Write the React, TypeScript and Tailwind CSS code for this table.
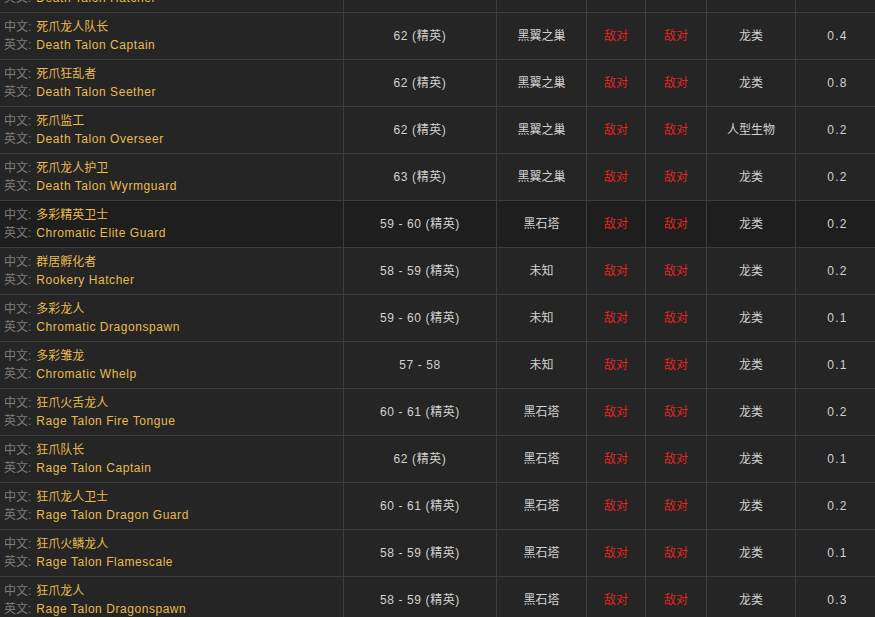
const rows = [
  { cn: "死爪孵化者", en: "Death Talon Hatcher", lv: "62 (精英)", zone: "黑翼之巢", type: "龙类", rate: "0.2" },
  { cn: "死爪龙人队长", en: "Death Talon Captain", lv: "62 (精英)", zone: "黑翼之巢", type: "龙类", rate: "0.4" },
  { cn: "死爪狂乱者", en: "Death Talon Seether", lv: "62 (精英)", zone: "黑翼之巢", type: "龙类", rate: "0.8" },
  { cn: "死爪监工", en: "Death Talon Overseer", lv: "62 (精英)", zone: "黑翼之巢", type: "人型生物", rate: "0.2" },
  { cn: "死爪龙人护卫", en: "Death Talon Wyrmguard", lv: "63 (精英)", zone: "黑翼之巢", type: "龙类", rate: "0.2" },
  { cn: "多彩精英卫士", en: "Chromatic Elite Guard", lv: "59 - 60 (精英)", zone: "黑石塔", type: "龙类", rate: "0.2", dark: true },
  { cn: "群居孵化者", en: "Rookery Hatcher", lv: "58 - 59 (精英)", zone: "未知", type: "龙类", rate: "0.2" },
  { cn: "多彩龙人", en: "Chromatic Dragonspawn", lv: "59 - 60 (精英)", zone: "未知", type: "龙类", rate: "0.1" },
  { cn: "多彩雏龙", en: "Chromatic Whelp", lv: "57 - 58", zone: "未知", type: "龙类", rate: "0.1" },
  { cn: "狂爪火舌龙人", en: "Rage Talon Fire Tongue", lv: "60 - 61 (精英)", zone: "黑石塔", type: "龙类", rate: "0.2" },
  { cn: "狂爪队长", en: "Rage Talon Captain", lv: "62 (精英)", zone: "黑石塔", type: "龙类", rate: "0.1" },
  { cn: "狂爪龙人卫士", en: "Rage Talon Dragon Guard", lv: "60 - 61 (精英)", zone: "黑石塔", type: "龙类", rate: "0.2" },
  { cn: "狂爪火鳞龙人", en: "Rage Talon Flamescale", lv: "58 - 59 (精英)", zone: "黑石塔", type: "龙类", rate: "0.1" },
  { cn: "狂爪龙人", en: "Rage Talon Dragonspawn", lv: "58 - 59 (精英)", zone: "黑石塔", type: "龙类", rate: "0.3" },
];

const cell = "flex items-center justify-center border-r border-[#3d3d3d]";

const App = () => {
  return (
    <div className="w-[875px] h-[617px] overflow-hidden bg-[#242424] text-[12px] text-[#d2d2d2] [font-family:'Liberation_Sans','Noto_Sans_CJK_SC',sans-serif]">
      <div className="-mt-[34px]">
        {rows.map((r, i) => (
          <div
            key={i}
            className={`grid grid-cols-[344px_153px_90px_59px_61px_89px_79px] h-[47px] border-b border-[#3d3d3d] ${r.dark ? "bg-[#1e1e1e]" : "bg-[#252525]"}`}
          >
            <div className="flex flex-col justify-center pl-1 border-r border-[#3d3d3d] leading-[18px]">
              <div className="flex gap-[5px]">
                <span className="text-[#7c7c7c]">中文:</span>
                <span className="text-[#e8bb50]">{r.cn}</span>
              </div>
              <div className="flex gap-[5px]">
                <span className="text-[#7c7c7c]">英文:</span>
                <span className="text-[#e8bb50] tracking-[0.55px]">{r.en}</span>
              </div>
            </div>
            <div className={`${cell} tracking-[0.6px]`}>{r.lv}</div>
            <div className={cell}>{r.zone}</div>
            <div className={`${cell} text-[#e02424]`}>敌对</div>
            <div className={`${cell} text-[#e02424]`}>敌对</div>
            <div className={cell}>{r.type}</div>
            <div className="flex items-center justify-center pl-1 tracking-[1.2px]">{r.rate}</div>
          </div>
        ))}
      </div>
    </div>
  );
};

export default App;
